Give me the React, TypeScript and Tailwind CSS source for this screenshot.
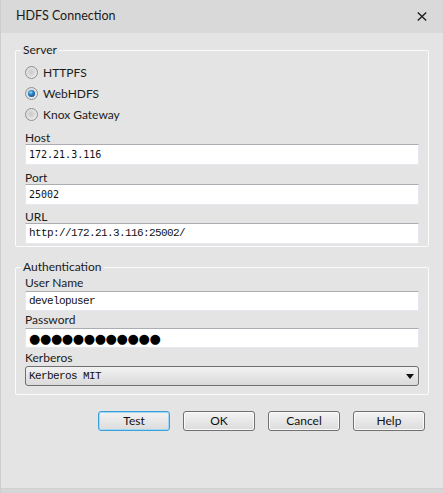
import React from "react";

const mono = "font-['Liberation_Mono',monospace] text-[11px] tracking-[-0.6px]";
const digits = "font-['DejaVu_Sans_Mono',monospace] text-[10px]";

function Radio({ label, checked }: { label: string; checked?: boolean }) {
  return (
    <label className="flex h-[21px] items-center gap-[5px]">
      <span className="flex h-[13px] w-[13px] items-center justify-center rounded-full border border-[#8e8f8f] bg-[radial-gradient(circle_at_45%_45%,#c9c9c9_0%,#e2e2e2_55%,#fbfbfb_100%)]">
        {checked && (
          <span className="h-[7px] w-[7px] rounded-full bg-[radial-gradient(circle_at_40%_35%,#9fdcff_0%,#2c86c9_35%,#0d3b66_100%)]" />
        )}
      </span>
      <span>{label}</span>
    </label>
  );
}

function TextBox({ children, className = "" }: { children: React.ReactNode; className?: string }) {
  return (
    <div
      className={`flex items-center border border-[#e3e9ef] border-t-[#abadb3] bg-white pl-[3px] text-[#111] ${className}`}
    >
      {children}
    </div>
  );
}

function Button({ label, focused }: { label: string; focused?: boolean }) {
  return (
    <button
      className={`flex h-[20px] w-[72px] items-center justify-center rounded-[3px] border bg-gradient-to-b from-[#f3f3f3] to-[#dcdcdc] text-[12px] leading-none text-[#111] ${
        focused ? "border-[#3c9fd8] shadow-[inset_0_0_0_1px_#9fd8f6]" : "border-[#707070] shadow-[inset_0_0_0_1px_#fafafa]"
      }`}
    >
      {label}
    </button>
  );
}

export default function App() {
  return (
    <div className="flex h-[493px] w-[443px] flex-col border-l border-[#cdcdcd] bg-[#e4e4e4] font-['Lato',sans-serif] text-[12px] text-[#1b1b1b]">
      {/* title bar */}
      <div className="flex h-[33px] shrink-0 items-center justify-between bg-[#d9d9d9] pl-[15px] pr-[15px]">
        <span className="text-[12.5px]">HDFS Connection</span>
        <svg width="10" height="9" viewBox="0 0 10 9" className="mr-[1px]">
          <path d="M0.8 0.5 L9.2 8.5 M9.2 0.5 L0.8 8.5" stroke="#1a1a1a" strokeWidth="1.3" fill="none" />
        </svg>
      </div>

      <div className="flex flex-1 flex-col px-[14px] pt-[9px]">
        {/* Server */}
        <fieldset className="rounded-[2px] border border-[#fbfbfb]">
          <legend className="ml-[5px] px-[2px] leading-[16px]">Server</legend>
          <div className="flex flex-col px-[9px] pb-[2px] pt-[4px]">
            <Radio label="HTTPFS" />
            <Radio label="WebHDFS" checked />
            <Radio label="Knox Gateway" />

            <div className="mt-[6px] h-[13px] leading-[13px]">Host</div>
            <TextBox className={`h-[21px] ${digits}`}>172.21.3.116</TextBox>

            <div className="mt-[6px] h-[13px] leading-[13px]">Port</div>
            <TextBox className={`h-[21px] ${digits}`}>25002</TextBox>

            <div className="mt-[5px] h-[13px] leading-[13px]">URL</div>
            <TextBox className={`h-[21px] ${mono}`}>http://172.21.3.116:25002/</TextBox>
          </div>
        </fieldset>

        {/* Authentication */}
        <fieldset className="mt-[12px] rounded-[2px] border border-[#fbfbfb]">
          <legend className="ml-[5px] px-[2px] leading-[16px]">Authentication</legend>
          <div className="flex flex-col px-[9px] pb-[8px]">
            <div className="h-[16px] leading-[16px]">User Name</div>
            <TextBox className={`h-[20px] ${mono}`}>developuser</TextBox>

            <div className="mt-[1px] h-[16px] leading-[16px]">Password</div>
            <TextBox className="h-[20px] font-['DejaVu_Sans',sans-serif] text-[13px] leading-none tracking-[-0.4px] text-black">
              ●●●●●●●●●●●●
            </TextBox>

            <div className="mt-[2px] h-[16px] leading-[16px]">Kerberos</div>
            <div
              className={`flex h-[20px] items-center justify-between rounded-[3px] border border-[#707070] bg-gradient-to-b from-[#f2f2f2] to-[#dadada] pl-[3px] pr-[4px] text-[#111] ${mono}`}
            >
              <span>Kerberos MIT</span>
              <svg width="8" height="5" viewBox="0 0 8 5">
                <path d="M0 0 H8 L4 5 Z" fill="#111" />
              </svg>
            </div>
          </div>
        </fieldset>

        {/* buttons */}
        <div className="mr-[4px] mt-[16px] flex justify-end gap-[13px]">
          <Button label="Test" focused />
          <Button label="OK" />
          <Button label="Cancel" />
          <Button label="Help" />
        </div>
      </div>

      <div className="h-[5px] shrink-0 border-t border-[#d0d0d0] bg-[#d6d6d6]" />
    </div>
  );
}
